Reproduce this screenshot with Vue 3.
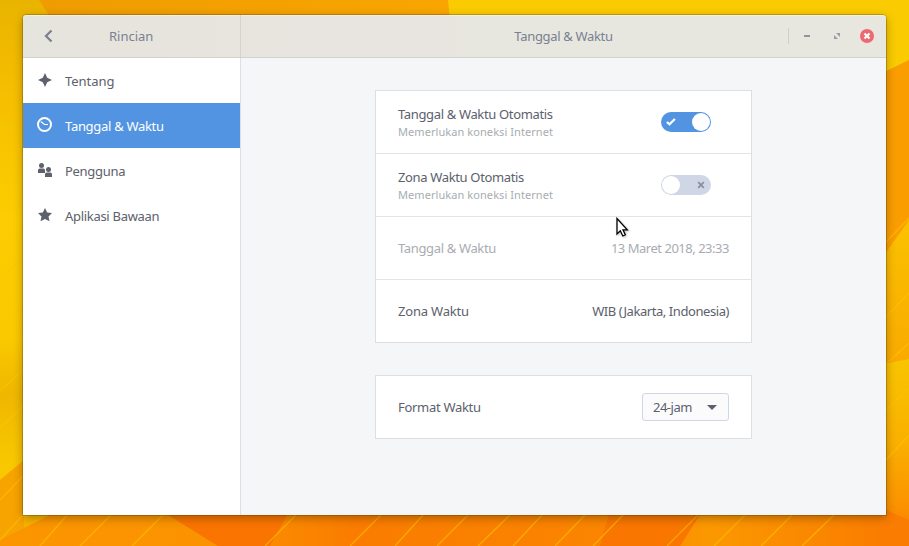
<script setup>
const items = [
  { id: 'about', label: 'Tentang' },
  { id: 'clock', label: 'Tanggal & Waktu' },
  { id: 'users', label: 'Pengguna' },
  { id: 'apps', label: 'Aplikasi Bawaan' },
]
const active = 'clock'
</script>

<template>
  <div class="desktop">
    <svg class="wallpaper" width="909" height="546" viewBox="0 0 909 546" aria-hidden="true">
      <defs>
        <linearGradient id="left" x1="0" y1="0" x2="0" y2="1">
          <stop offset="0" stop-color="#e9b400" />
          <stop offset=".15" stop-color="#f5bd00" />
          <stop offset=".4" stop-color="#fccd00" />
          <stop offset=".62" stop-color="#fbc900" />
          <stop offset=".72" stop-color="#efb700" />
          <stop offset=".86" stop-color="#f9c900" />
          <stop offset="1" stop-color="#f9a800" />
        </linearGradient>
        <linearGradient id="top" x1="0" y1="0" x2="1" y2="0">
          <stop offset="0" stop-color="#ee9c00" />
          <stop offset="1" stop-color="#f9a500" />
        </linearGradient>
        <linearGradient id="mid-leaf" x1="0" y1="0" x2="0" y2="1">
          <stop offset="0" stop-color="#fbc200" />
          <stop offset="1" stop-color="#f9a700" />
        </linearGradient>
        <linearGradient id="low-leaf" x1="0" y1="0" x2="0" y2="1">
          <stop offset="0" stop-color="#f9c400" />
          <stop offset=".45" stop-color="#fab000" />
          <stop offset=".75" stop-color="#fb9500" />
          <stop offset="1" stop-color="#fa7c00" />
        </linearGradient>
        <linearGradient id="bottom" x1="0" y1="0" x2="1" y2="0">
          <stop offset="0" stop-color="#fb9500" />
          <stop offset=".25" stop-color="#fb9300" />
          <stop offset=".4" stop-color="#fa7c00" />
          <stop offset=".7" stop-color="#fb8500" />
          <stop offset=".8" stop-color="#fb9800" />
          <stop offset="1" stop-color="#fa7c00" />
        </linearGradient>
      </defs>
      <rect width="909" height="546" fill="url(#left)" />
      <path d="M39 0H449V20H52Z" fill="url(#top)" />
      <path d="M448 0H909V75L880 75V20H450Z" fill="#f9cb00" />
      <path d="M909 60L880 74V280H909Z" fill="#fa9d00" />
      <path d="M909 220L880 261V380H909Z" fill="url(#mid-leaf)" />
      <path d="M909 359L880 365V546H909Z" fill="url(#low-leaf)" />
      <path d="M0 480L24 460V546H0Z" fill="#f7a300" />
      <path d="M0 540L60 510H886V546H0Z" fill="url(#bottom)" />
      <path d="M160 510H290L270 546H218Z" fill="#f97400" />
      <path d="M610 510H703L680 546H600Z" fill="#f97600" />
      <path d="M886 510V546H909V520Z" fill="#fa7c00" />
      <g stroke="#ffc400" stroke-width="1.3" opacity=".6">
        <path d="M0 278L24 258M0 325L24 306M0 391L24 369M0 428L24 405M0 458L24 435M0 500L24 475M0 540L24 514M40 546L68 514M80 546L112 514M132 546L164 514M265 546L297 514M350 546L382 514M395 546L424 514M437 546L469 514M478 546L511 514M513 546L543 514M555 546L586 514M593 546L624 514M667 546L699 514M714 546L746 514M761 546L793 514M802 546L835 514M886 242L909 218M886 317L909 293M886 364L909 343M886 411L909 388M886 460L909 435" />
      </g>
    </svg>

    <main class="window">
      <header class="titlebar">
        <div class="title-left">
          <svg class="back" width="10" height="14" viewBox="0 0 10 14"><path d="M7.500 1.500L2 7L7.500 12.500" fill="none" stroke="#7a8191" stroke-width="2.300" /></svg>
          <span class="title rincian">Rincian</span>
        </div>
        <div class="title-right">
          <span class="title main-title">Tanggal &amp; Waktu</span>
          <div class="controls">
            <svg width="6" height="2" class="minimize"><path d="M0 1H6" stroke="#90949e" stroke-width="2" /></svg>
            <svg width="6" height="6" class="maximize" viewBox="0 0 6 6"><path d="M2 0H6V4ZM0 2V6H4Z" fill="#9a9da5" /></svg>
            <svg width="14" height="14" class="close" viewBox="0 0 14 14"><circle cx="7" cy="7" r="7" fill="#ed686f" /><path d="M4.500 4.500L9.500 9.500M9.500 4.500L4.500 9.500" stroke="#fff" stroke-width="2.200" /></svg>
          </div>
        </div>
      </header>

      <div class="body">
        <nav class="sidebar">
          <div v-for="item in items" :key="item.id" class="item" :class="[item.id, { active: item.id === active }]">
            <svg class="icon" width="16" height="16" viewBox="0 0 16 16">
              <path v-if="item.id === 'about'" d="M8 1L10.200 5.800L15 8L10.200 10.200L8 15L5.800 10.200L1 8L5.800 5.800Z" fill="#5c616c" />
              <g v-else-if="item.id === 'clock'" fill="none" stroke="#fff">
                <circle cx="7.500" cy="7.500" r="6.500" stroke-width="2" />
                <path d="M3.800 4.500L7.500 7.500H11" stroke-width="1.200" />
              </g>
              <g v-else-if="item.id === 'users'" fill="#5c616c">
                <circle cx="4.500" cy="3.500" r="2.500" />
                <path d="M1 11V8.300Q1 6.500 2.800 6.500H6.500Q8 6.500 8 8.300V11Z" />
                <circle cx="11.500" cy="7.500" r="2.500" />
                <path d="M8 15V12.300Q8 10.500 9.800 10.500H13.200Q15 10.500 15 12.300V15Z" />
              </g>
              <path v-else d="M8 1L10.200 5.500L15 6.100L11.500 9.400L12.500 14.300L8 12L3.500 14.300L4.500 9.400L1 6.100L5.800 5.500Z" fill="#5c616c" />
            </svg>
            <span class="label">{{ item.label }}</span>
          </div>
        </nav>

        <section class="content">
          <div class="card">
            <div class="row">
              <div class="stack">
                <span class="name">Tanggal &amp; Waktu Otomatis</span>
                <span class="hint">Memerlukan koneksi Internet</span>
              </div>
              <div class="switch on">
                <svg width="10" height="8" viewBox="0 0 10 8"><path d="M.9 4L3.500 6.300L8.900 1" fill="none" stroke="#fff" stroke-width="2.300" /></svg>
                <span class="knob"></span>
              </div>
            </div>
            <div class="row">
              <div class="stack">
                <span class="name">Zona Waktu Otomatis</span>
                <span class="hint">Memerlukan koneksi Internet</span>
              </div>
              <div class="switch">
                <span class="knob"></span>
                <svg width="8" height="8" viewBox="0 0 8 8"><path d="M1.200 1.200L6.800 6.800M6.800 1.200L1.200 6.800" stroke="#8b90a0" stroke-width="1.800" /></svg>
              </div>
            </div>
            <div class="row disabled">
              <span class="name date">Tanggal &amp; Waktu</span>
              <span class="value date-value">13 Maret 2018, 23:33</span>
            </div>
            <div class="row">
              <span class="name zone">Zona Waktu</span>
              <span class="value zone-value">WIB (Jakarta, Indonesia)</span>
            </div>
          </div>

          <div class="card">
            <div class="row">
              <span class="name format">Format Waktu</span>
              <button class="combo" type="button">
                <span class="jam">24-jam</span>
                <svg width="10" height="5" viewBox="0 0 10 5"><path d="M0 0H10L5 5Z" fill="#5c616c" /></svg>
              </button>
            </div>
          </div>
        </section>
      </div>
    </main>

    <svg class="cursor" width="14" height="22" viewBox="0 0 14 22"><path d="M1 1.500V17L4.300 13.800L6.800 19L9.300 17.800L7 12.800H11.300Z" fill="#fff" stroke="#000" stroke-width="1.300" /></svg>
  </div>
</template>

<style>
body {
  margin: 0;
  overflow: hidden;
}
</style>

<style scoped>
.desktop {
  position: relative;
  box-sizing: border-box;
  width: 909px;
  height: 546px;
  padding: 15px 23px 31px;
  overflow: hidden;
  font-family: "Noto Sans", sans-serif;
  font-size: 13px;
  color: #5c616c;
}
.desktop svg {
  display: block;
  flex: none;
}
.wallpaper {
  position: absolute;
  inset: 0;
}
.window {
  position: relative;
  display: flex;
  flex-direction: column;
  height: 500px;
  border-radius: 4px 4px 0 0;
  background: #f5f6f7;
  box-shadow: 0 0 0 1px rgba(80, 50, 0, .28), 0 3px 10px rgba(60, 40, 0, .4);
}
.titlebar {
  display: flex;
  box-sizing: border-box;
  height: 43px;
  border-bottom: 1px solid #d3d2cf;
  border-radius: 4px 4px 0 0;
  background: linear-gradient(90deg, #e5e4dd 0, #e7e4de 10%, #e8e4df 48%, #e7e7df 53%, #e7e6df 100%);
  box-shadow: inset 0 1px #f2f0ea;
  color: #7a8191;
}
.title-left {
  display: flex;
  align-items: center;
  box-sizing: border-box;
  width: 218px;
  padding-left: 21px;
  border-right: 1px solid #d3d2cf;
}
.rincian {
  margin-left: 55px;
}
.title-right {
  display: grid;
  flex: 1;
  grid-template-columns: 1fr auto 1fr;
  align-items: center;
}
.main-title {
  grid-column: 2;
  letter-spacing: -.33px;
}
.controls {
  display: flex;
  align-items: center;
  justify-self: end;
  height: 16px;
  padding-right: 12px;
  padding-left: 15px;
  border-left: 1px solid #cfcfcd;
}
.maximize {
  margin-left: 24px;
}
.close {
  margin-left: 20px;
}
.body {
  display: flex;
  flex: 1;
}
.sidebar {
  box-sizing: border-box;
  width: 218px;
  border-right: 1px solid #dcdfe3;
  background: #fff;
}
.item {
  display: flex;
  align-items: center;
  gap: 12px;
  height: 45px;
  padding-left: 14px;
  letter-spacing: -.3px;
}
.item.about {
  letter-spacing: -.05px;
}
.icon {
  margin-bottom: 2px;
}
.item.active {
  background: #5294e2;
  color: #fff;
}
.label,
.name,
.value,
.title {
  line-height: 18px;
  white-space: nowrap;
}
.name {
  letter-spacing: -.35px;
}
.name.zone {
  letter-spacing: -.2px;
}
.name.format {
  letter-spacing: -.3px;
}
.date-value {
  letter-spacing: -.48px;
}
.zone-value {
  letter-spacing: -.43px;
}
.jam {
  letter-spacing: -.5px;
}
.content {
  display: flex;
  flex: 1;
  flex-direction: column;
  align-items: center;
  gap: 32px;
  padding-top: 32px;
}
.card {
  box-sizing: border-box;
  width: 377px;
  border: 1px solid #dcdfe3;
  background: #fff;
}
.row {
  display: flex;
  align-items: center;
  justify-content: space-between;
  height: 62px;
  padding: 0 22px;
}
.row + .row {
  border-top: 1px solid #e2e4e7;
}
.stack {
  display: flex;
  flex-direction: column;
}
.hint {
  font-size: 11px;
  line-height: 17px;
  letter-spacing: .07px;
  color: #a8adb0;
}
.disabled {
  color: #a9acb2;
}
.switch {
  display: flex;
  align-items: center;
  justify-content: space-between;
  box-sizing: border-box;
  width: 50px;
  height: 20px;
  margin-right: 18px;
  padding: 0 6px 0 1px;
  border-radius: 10px;
  background: #cfd6e6;
}
.switch.on {
  padding: 0 1px 0 5px;
  background: #5294e2;
}
.knob {
  width: 18px;
  height: 18px;
  border-radius: 50%;
  background: #fff;
}
.combo {
  display: flex;
  align-items: center;
  justify-content: space-between;
  box-sizing: border-box;
  width: 87px;
  height: 28px;
  padding: 0 11px 0 10px;
  border: 1px solid #cfd6e6;
  border-radius: 3px;
  background: #fbfbfc;
  font: inherit;
  color: inherit;
}
.cursor {
  position: absolute;
  top: 217px;
  left: 616px;
  filter: drop-shadow(1px 1px 1px rgba(0, 0, 0, .25));
}
</style>
